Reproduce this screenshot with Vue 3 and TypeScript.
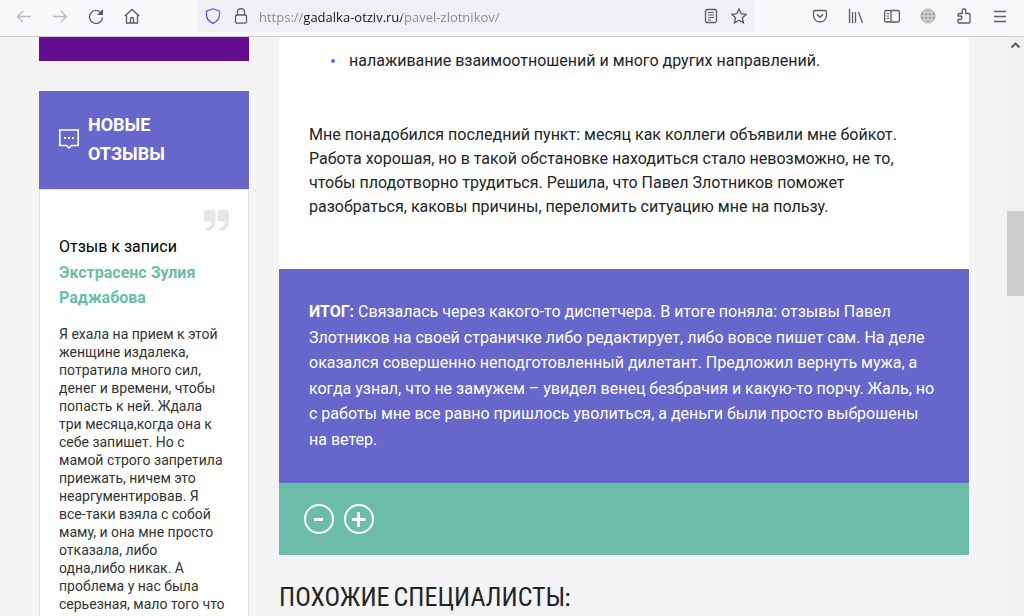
<script setup lang="ts">
import { ref, computed } from 'vue'

const address = ref('https://gadalka-otziv.ru/pavel-zlotnikov/')
const scroll = { offset: 28, size: 15 }
const thumbStyle = computed(() => ({ top: `${scroll.offset}%`, height: `${scroll.size}%` }))

const review = {
  label: 'Отзыв к записи',
  subject: 'Экстрасенс Зулия Раджабова',
  text:
    'Я ехала на прием к этой женщине издалека, потратила много сил, денег и времени, чтобы попасть к ней. Ждала три месяца,когда она к себе запишет. Но с мамой строго запретила приежать, ничем это неаргументировав. Я все-таки взяла с собой маму, и она мне просто отказала, либо одна,либо никак. А проблема у нас была серьезная, мало того что',
}
</script>

<template>
  <div class="browser">
    <header class="toolbar">
      <nav class="nav" aria-label="Навигация">
        <button class="tool faded" type="button" aria-label="Назад">
          <svg viewBox="0 0 16 16"><path d="M15 8.5H1.5M7 3 1.5 8.5 7 14" /></svg>
        </button>
        <button class="tool faded" type="button" aria-label="Вперёд">
          <svg viewBox="0 0 16 16"><path d="M1 8.5h13.5M9 3l5.500 5.500L9 14" /></svg>
        </button>
        <button class="tool" type="button" aria-label="Обновить">
          <svg viewBox="0 0 16 16"><path d="M13.200 5A6.500 6.500 0 1 0 14.500 9.500" /><path class="solid" d="M15 1v6H9z" /></svg>
        </button>
        <button class="tool" type="button" aria-label="Домой">
          <svg viewBox="0 0 16 16"><path d="M.8 8 8 1.500 15.200 8M2.500 7v8h11V7M6.500 15v-4a1.500 1.500 0 0 1 3 0v4" /></svg>
        </button>
      </nav>
      <div class="address">
        <button class="tool" type="button" aria-label="Защита">
          <svg viewBox="0 0 16 16">
            <defs>
              <linearGradient id="shieldFill" x1="0" y1="1" x2="1" y2="0">
                <stop offset="0" stop-color="#2450d8" />
                <stop offset="1" stop-color="#9a62f5" />
              </linearGradient>
            </defs>
            <path stroke="url(#shieldFill)" d="M8 .9 14.500 3v4c0 4-2.500 6.500-6.500 8.300C4 13.500 1.500 11 1.500 7V3z" />
          </svg>
        </button>
        <button class="tool" type="button" aria-label="Соединение">
          <svg viewBox="0 0 16 16"><rect x="2.500" y="7" width="11" height="8.200" rx="1.500" /><path d="M4.500 7V4a3.500 3.500 0 0 1 7 0v3" /></svg>
        </button>
        <input v-model="address" class="url" type="text" aria-label="Адрес" spellcheck="false" />
        <button class="tool" type="button" aria-label="Режим чтения">
          <svg viewBox="0 0 16 16"><rect x="2.500" y="1.500" width="11" height="13" rx="1.500" /><path class="fine" d="M5 4.500h6M5 7h6M5 9.500h6M5 12h3" /></svg>
        </button>
        <button class="tool" type="button" aria-label="В закладки">
          <svg viewBox="0 0 16 16"><path d="m8 1 2.100 4.700 5.100.6-3.800 3.400 1.100 5.200L8 12.300l-4.500 2.600 1.100-5.200L.8 6.300l5.100-.6z" /></svg>
        </button>
      </div>
      <div class="extras">
        <button class="tool" type="button" aria-label="Pocket">
          <svg viewBox="0 0 16 16"><path d="M3 2.500h10A1.500 1.500 0 0 1 14.500 4v3.500a6.500 6.500 0 0 1-13 0V4A1.500 1.500 0 0 1 3 2.500z" /><path d="m4.800 6.300 3.200 3 3.200-3" /></svg>
        </button>
        <button class="tool" type="button" aria-label="Библиотека">
          <svg viewBox="0 0 16 16"><path d="M1.500 1v14M4.500 4v11M7.500 4v11M10.500 4l4 11" /></svg>
        </button>
        <button class="tool" type="button" aria-label="Боковая панель">
          <svg viewBox="0 0 16 16"><rect x=".6" y="2.500" width="14.800" height="11.500" rx="1.500" /><path d="M7 2.500V14" /><path class="fine" d="M2.500 5.500H5M2.500 8H5M2.500 10.500H5" /></svg>
        </button>
        <button class="tool" type="button" aria-label="Язык">
          <svg class="globe" viewBox="0 0 16 16"><circle cx="8" cy="8" r="7.500" /><path d="M0 8h16M1.500 4h13M1.500 12h13M8 0v16M6 .5c-3 4-3 11 0 15M10 .5c3 4 3 11 0 15" /></svg>
        </button>
        <button class="tool" type="button" aria-label="Расширения">
          <svg viewBox="0 0 16 16"><path d="M2 8V6.500a1 1 0 0 1 1-1h3.200V2.800a1.800 1.800 0 0 1 3.600 0v2.700H13a1 1 0 0 1 1 1V14a1 1 0 0 1-1 1H3a1 1 0 0 1-1-1v-2.500h2.200a1.750 1.750 0 0 0 0-3.500z" /></svg>
        </button>
        <button class="tool" type="button" aria-label="Меню">
          <svg viewBox="0 0 16 16"><path d="M2 3.500h12M2 8.500h12M2 13.500h12" /></svg>
        </button>
      </div>
    </header>

    <div class="viewport">
      <div class="page">
        <aside class="sidebar">
          <div class="strip"></div>
          <section>
            <h2 class="reviews-title">
              <svg viewBox="0 0 20 20" aria-hidden="true"><path d="M.8 1h18.400v15.500h-6.700L10 19l-2.500-2.500H.8z" /><path class="dots" d="M5 8h2v2H5zM9 8h2v2H9zM13 8h2v2h-2z" /></svg>
              <span>НОВЫЕ ОТЗЫВЫ</span>
            </h2>
            <article class="review">
              <svg class="quote" viewBox="0 0 24 20" aria-hidden="true">
                <path d="M2 0h7a2 2 0 0 1 2 2v9.500a8.500 8.500 0 0 1-8 8.500q-1.500 0-1.500-1.500V18Q1.500 17 3 17a5 5 0 0 0 4-5v-1H2a2 2 0 0 1-2-2V2a2 2 0 0 1 2-2z" />
                <path d="M15 0h7a2 2 0 0 1 2 2v9.500a8.500 8.500 0 0 1-8 8.500q-1.500 0-1.500-1.500V18q0-1 1.500-1a5 5 0 0 0 4-5v-1h-5a2 2 0 0 1-2-2V2a2 2 0 0 1 2-2z" />
              </svg>
              <h3 class="review-head">
                {{ review.label }}
                <a href="#">{{ review.subject }}</a>
              </h3>
              <p class="review-text">{{ review.text }}</p>
            </article>
          </section>
        </aside>

        <main class="content">
          <div class="story">
            <ul>
              <li>налаживание взаимоотношений и много других направлений.</li>
            </ul>
            <p>
              Мне понадобился последний пункт: месяц как коллеги объявили мне бойкот. Работа хорошая, но в такой
              обстановке находиться стало невозможно, не то, чтобы плодотворно трудиться. Решила, что Павел Злотников
              поможет разобраться, каковы причины, переломить ситуацию мне на пользу.
            </p>
          </div>
          <p class="verdict">
            <strong>ИТОГ:</strong> Связалась через какого-то диспетчера. В итоге поняла: отзывы Павел Злотников на
            своей страничке либо редактирует, либо вовсе пишет сам. На деле оказался совершенно неподготовленный
            дилетант. Предложил вернуть мужа, а когда узнал, что не замужем – увидел венец безбрачия и какую-то порчу.
            Жаль, но с работы мне все равно пришлось уволиться, а деньги были просто выброшены на ветер.
          </p>
          <div class="votes">
            <button type="button" aria-label="Минус">
              <svg viewBox="0 0 30 30"><circle cx="15" cy="15" r="14" /><path class="sign" d="M10 15.500h9" /></svg>
            </button>
            <button type="button" aria-label="Плюс">
              <svg viewBox="0 0 30 30"><circle cx="15" cy="15" r="14" /><path class="sign" d="M8 15.500h13.500M14.500 8v15" /></svg>
            </button>
          </div>
          <h2 class="similar">ПОХОЖИЕ СПЕЦИАЛИСТЫ:</h2>
        </main>
      </div>

      <div class="scrollbar">
        <button type="button" aria-label="Вверх"><svg viewBox="0 0 17 17"><path d="m4.500 10.500 4-4 4 4" /></svg></button>
        <div class="track"><div class="thumb" :style="thumbStyle"></div></div>
      </div>
    </div>
  </div>
</template>

<style>
html,
body {
  margin: 0;
  overflow: hidden;
}
</style>

<style scoped>
* {
  box-sizing: border-box;
}
.browser {
  display: flex;
  flex-direction: column;
  height: 100vh;
  background: #f4f4f4;
  color: #212529;
  font: 16px/24px Roboto, "Open Sans", sans-serif;
}
button {
  padding: 0;
  border: 0;
  background: none;
  color: inherit;
}
svg {
  display: block;
  fill: none;
  stroke: currentColor;
}
h2,
h3,
p,
ul {
  margin: 0;
  padding: 0;
}
.toolbar {
  display: flex;
  flex: none;
  height: 37px;
  border-bottom: 1px solid #ccccd0;
  background: #f9f9fb;
  color: #5b5b66;
}
.nav {
  display: flex;
  flex: none;
  gap: 20px;
  padding-left: 16px;
  width: 197px;
}
.tool {
  display: grid;
  flex: none;
  place-items: center;
  width: 16px;
  height: 32px;
}
.tool svg {
  width: 16px;
  height: 16px;
  stroke-width: 1.3;
}
.tool .fine {
  stroke-width: 1;
}
.faded {
  color: #b9b9c0;
}
.solid {
  fill: currentColor;
  stroke: none;
}
.address {
  display: flex;
  flex: 1;
  gap: 12px;
  align-items: center;
  height: 32px;
  padding: 0 8px;
  border-radius: 0 0 4px 4px;
  background: #f0f0f4;
}
.url {
  flex: 1;
  min-width: 0;
  height: 32px;
  margin-left: -2px;
  padding: 2px 0 0;
  border: 0;
  outline: 0;
  background: linear-gradient(to right, #85858d 45px, #15141a 45px 143px, #85858d 143px);
  background-clip: text;
  -webkit-background-clip: text;
  color: transparent;
  font: 13px "Open Sans", "Noto Sans", sans-serif;
}
.extras {
  display: flex;
  gap: 20px;
  padding: 0 16px 0 57px;
}
.globe circle {
  fill: #a2a2a2;
  stroke: none;
}
.globe path {
  stroke: #e6e6e8;
  stroke-width: 1;
}
.viewport {
  display: flex;
  flex: 1;
  min-height: 0;
}
.page {
  display: flex;
  flex: 1;
  gap: 30px;
  padding: 0 38px 0 39px;
  overflow: hidden;
}
.sidebar {
  flex: none;
  width: 210px;
}
.strip {
  height: 24px;
  margin-bottom: 30px;
  background: #640d90;
}
.reviews-title {
  display: flex;
  gap: 9px;
  align-items: center;
  padding: 19px 20px 21px;
  background: #6766cb;
  color: #fff;
  font-size: 18px;
  font-weight: 700;
  line-height: 29px;
}
.reviews-title svg {
  flex: none;
  width: 20px;
  height: 20px;
  stroke-width: 1.6;
}
.reviews-title .dots {
  fill: currentColor;
  stroke: none;
}
.review {
  padding: 20px 19px;
  border: 1px solid #e4e4e4;
  background: #fff;
}
.quote {
  width: 25px;
  height: 21px;
  margin-left: auto;
  fill: #e6e6e6;
  stroke: none;
}
.review-head {
  margin: 3px 0 14px;
  color: #000;
  font-size: 16px;
  font-weight: 400;
  line-height: 1.6;
}
.review-head a {
  display: block;
  color: #6cbda8;
  font-weight: 700;
  text-decoration: none;
}
.review-text {
  padding-right: 3px;
  color: #333;
  font-size: 14px;
  line-height: 18px;
}
.content {
  flex: 1;
  min-width: 0;
}
.story {
  padding: 12px 30px 50px;
  background: #fff;
}
.story ul {
  margin-bottom: 50px;
  list-style: none;
}
.story li {
  display: flex;
  gap: 14px;
  align-items: center;
  padding-left: 22px;
}
.story li::before {
  width: 4px;
  height: 4px;
  border-radius: 50%;
  background: #6766cb;
  content: "";
}
.verdict {
  padding: 30px;
  background: #6766cb;
  color: #fff;
  line-height: 1.6;
}
.votes {
  display: flex;
  gap: 10px;
  padding: 21px 25px;
  background: #6cbda8;
  color: #fff;
}
.votes svg {
  width: 30px;
  height: 30px;
  stroke-width: 2;
}
.votes .sign {
  stroke-width: 3;
}
.similar {
  margin-top: 28px;
  font: 400 26px/32px "Bebas Neue", "Roboto Condensed", "Liberation Sans Narrow", sans-serif;
  white-space: nowrap;
}
.scrollbar {
  display: flex;
  flex: none;
  flex-direction: column;
  width: 17px;
  background: #f0f0f0;
  color: #606060;
}
.scrollbar svg {
  width: 17px;
  height: 17px;
  stroke-width: 2;
}
.track {
  position: relative;
  flex: 1;
}
.thumb {
  position: absolute;
  width: 100%;
  background: #cdcdcd;
}
</style>
